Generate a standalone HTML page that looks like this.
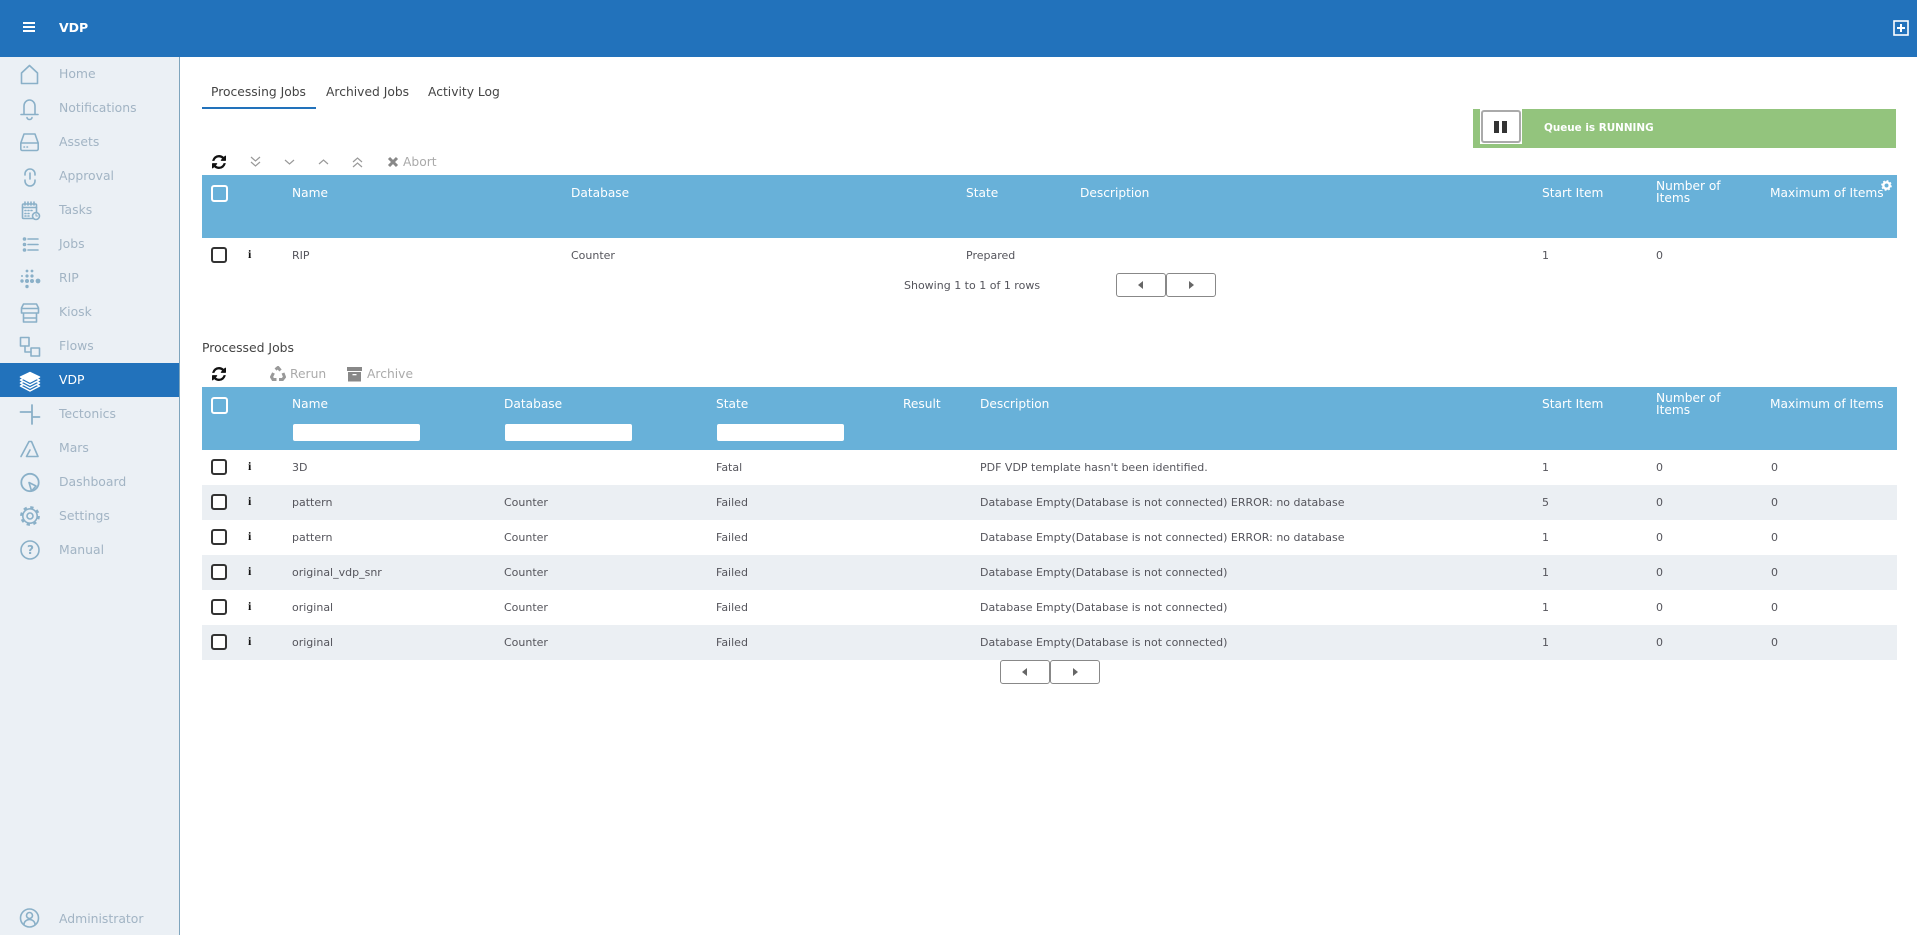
<!DOCTYPE html>
<html><head><meta charset="utf-8"><title>VDP</title>
<style>
html,body{margin:0;padding:0;width:1917px;height:935px;overflow:hidden;background:#fff;font-family:"DejaVu Sans","Liberation Sans",sans-serif;}
.a{position:absolute}
.t{position:absolute;white-space:nowrap;line-height:14px;height:14px;font-size:11px;color:#55555c;margin-top:1px}
.n{position:absolute;white-space:nowrap;line-height:16px;left:59px;font-size:12.4px;color:#a2b4c4;margin-top:1px}
.h{position:absolute;white-space:nowrap;line-height:14px;font-size:12.2px;color:#fff;}
.tab{position:absolute;white-space:nowrap;line-height:14px;font-size:12.3px;color:#444;top:85px}
.cb{position:absolute;left:211px;width:12px;height:12px;border:2px solid #333;border-radius:3px;background:#fff}
.chd{position:absolute;left:211px;width:13px;height:13px;border:2px solid #fff;border-radius:3px}
.i{position:absolute;left:248px;font:bold 12px/14px "Liberation Serif",serif;color:#111;margin-top:-1px}
.inp{position:absolute;top:424px;height:17px;width:127px;background:#fff;border-radius:2px}
.pg{position:absolute;width:48px;height:22px;border:1px solid #888;border-radius:3px;background:#fff}
.pg svg{position:absolute;left:20px;top:7px}
.tb{font-size:12.3px !important;color:#aaa !important;margin-top:0 !important}
</style></head><body>

<div class="a" style="left:0;top:0;width:1917px;height:57px;background:#2272bb"></div>
<div class="a" style="left:23px;top:22px;width:12px;height:2px;background:#fff;box-shadow:0 4px 0 #fff,0 8px 0 #fff"></div>
<div class="a" style="left:59px;top:21px;font-size:12.5px;font-weight:bold;line-height:14px;color:#fff">VDP</div>
<svg class="a" style="left:1892px;top:19px" width="18" height="18" viewBox="0 0 18 18"><rect x="2" y="2" width="14" height="14" fill="none" stroke="#fff" stroke-width="1.6"/><path d="M9 5v8M5 9h8" stroke="#fff" stroke-width="2"/></svg>

<div class="a" style="left:0;top:57px;width:179px;height:878px;background:#ebf0f5;border-right:1px solid #7fa5bd"></div>
<div class="a" style="left:0;top:363px;width:179px;height:34px;background:#2272bb"></div>

<div class="n" style="top:65px">Home</div>
<div class="n" style="top:99px">Notifications</div>
<div class="n" style="top:133px">Assets</div>
<div class="n" style="top:167px">Approval</div>
<div class="n" style="top:201px">Tasks</div>
<div class="n" style="top:235px">Jobs</div>
<div class="n" style="top:269px">RIP</div>
<div class="n" style="top:303px">Kiosk</div>
<div class="n" style="top:337px">Flows</div>
<div class="n" style="top:371px;color:#fff">VDP</div>
<div class="n" style="top:405px">Tectonics</div>
<div class="n" style="top:439px">Mars</div>
<div class="n" style="top:473px">Dashboard</div>
<div class="n" style="top:507px">Settings</div>
<div class="n" style="top:541px">Manual</div>
<div class="n" style="top:910px">Administrator</div>

<svg class="a" style="left:0;top:0" width="179" height="935" viewBox="0 0 179 935" fill="none" stroke="#8ab0c8" stroke-width="1.6" stroke-linejoin="round" stroke-linecap="round">
<path d="M21.5 83.5V73L29.5 65.5 37.5 73V83.5Z"/>
<path d="M24 114V106a5.5 6 0 0 1 11 0V114M21 114.5H38M27 117.5a2.5 2 0 0 0 5 0"/>
<path d="M20.8 143L24 134H35L38.2 143V149a1.5 1.5 0 0 1-1.5 1.5H22.3a1.5 1.5 0 0 1-1.5-1.5ZM20.8 143H38.2M24 147h.5M27 147h.5"/>
<path d="M25 175v-1a5 5 0 0 1 10 0v1M25 180v1a5 5 0 0 0 10 0v-1M30 173v6"/>
<rect x="22.5" y="204" width="14" height="14.5" rx="1"/><path d="M25 202v3M28 202v3M31 202v3M34 202v3M22.5 207.5H36.5M25 210.5h1M28 210.5h1M31 210.5h1M25 213.5h1M28 213.5h1M25 216h1M28 216h1"/><circle cx="36" cy="216" r="3.5" fill="#ebf0f5"/><path d="M36 214v2h1.5" stroke-width="1"/>
<path d="M28 239H38M28 244.5H38M28 250H38"/><circle cx="24.5" cy="239" r="1"/><circle cx="24.5" cy="244.5" r="1"/><circle cx="24.5" cy="250" r="1"/>
<g fill="#8ab0c8" stroke="none"><circle cx="27" cy="271" r="1.4"/><circle cx="32" cy="271" r="1.4"/><circle cx="22" cy="276" r="1"/><circle cx="27" cy="276" r="1.6"/><circle cx="32" cy="276" r="1.6"/><circle cx="22" cy="281" r="1.7"/><circle cx="27" cy="281" r="2"/><circle cx="32" cy="281" r="2"/><circle cx="38" cy="281" r="2.4"/><circle cx="27" cy="286.5" r="1.7"/></g>
<path d="M23.5 304H36.5L38.5 308V313H21.5V308ZM21.5 308.5H38.5M23.5 313V322H36.5V313M23.5 318H36.5"/>
<rect x="20.5" y="337.5" width="8.5" height="8.5"/><rect x="31" y="348" width="8.5" height="8"/><path d="M25 346V352H31"/>
<g stroke="#fff" fill="#2272bb" stroke-width="1.5"><path d="M20.5 386L30 381 39.5 386 30 391Z"/><path d="M20.5 383L30 378 39.5 383 30 388Z"/><path d="M20.5 380L30 375 39.5 380 30 385Z"/><path d="M20.5 377L30 372.5 39.5 377 30 382Z" fill="#fff"/></g>
<path d="M20.5 412H32M32 405V424M32 417H39.5" stroke-width="1.8"/>
<path d="M21 456.5L29 441.5H31.5L38 456.5H26.5L30 450"/>
<circle cx="30" cy="482.5" r="8.7" stroke-width="1.8"/><path d="M29 482.5L36 486 31.5 491Z" fill="#ebf0f5" stroke-width="1.6"/>
<circle cx="30" cy="516" r="3"/><circle cx="30" cy="516" r="7.2"/><circle cx="30" cy="516" r="8.7" stroke-width="2.4" stroke-dasharray="3.3 3.53" stroke-linecap="butt"/>
<circle cx="30" cy="550" r="9"/>
<circle cx="29.5" cy="918" r="9"/><circle cx="29.5" cy="915.5" r="3"/><path d="M24 924.5a5.5 5 0 0 1 11 0"/>
</svg>
<div class="a" style="left:26px;top:542px;width:9px;text-align:center;font:bold 12px/16px 'DejaVu Sans',sans-serif;color:#8ab0c8">?</div>

<div class="tab" style="left:211px">Processing Jobs</div>
<div class="tab" style="left:326px">Archived Jobs</div>
<div class="tab" style="left:428px">Activity Log</div>
<div class="a" style="left:202px;top:107px;width:114px;height:2px;background:#2272bb"></div>

<div class="a" style="left:1473px;top:109px;width:423px;height:39px;background:#93c47d"></div>
<div class="a" style="left:1480px;top:109px;width:42px;height:35px;background:#fff"></div>
<div class="a" style="left:1481px;top:110px;width:36px;height:29px;border:2px solid #aaa;border-radius:3px;background:#fff"></div>
<div class="a" style="left:1494px;top:121px;width:5px;height:12px;background:#333"></div>
<div class="a" style="left:1502px;top:121px;width:5px;height:12px;background:#333"></div>
<div class="a" style="left:1544px;top:121px;font-size:10.4px;font-weight:bold;line-height:14px;color:#fff">Queue is RUNNING</div>

<!-- toolbar 1 -->
<svg class="a" style="left:212px;top:155px" width="14" height="14" viewBox="128 128 1536 1536"><path fill="#111" d="M1639 1056q0 5-1 7-64 268-268 434.5t-478 166.5q-146 0-282.5-55t-243.5-157l-129 129q-19 19-45 19t-45-19-19-45v-448q0-26 19-45t45-19h448q26 0 45 19t19 45-19 45l-137 137q71 66 161 102t187 36q134 0 250-65t186-179q11-17 53-117 8-23 30-23h192q13 0 22.5 9.5t9.5 22.5zm25-800v448q0 26-19 45t-45 19h-448q-26 0-45-19t-19-45 19-45l138-138q-148-137-349-137-134 0-250 65t-186 179q-11 17-53 117-8 23-30 23h-199q-13 0-22.5-9.5t-9.5-22.5v-7q65-268 270-434.5t480-166.5q146 0 284 55.5t245 156.5l130-129q19-19 45-19t45 19 19 45z"/></svg>
<svg class="a" style="left:245px;top:155px" width="130" height="14" viewBox="0 0 130 14" fill="none" stroke="#999" stroke-width="1.2"><path d="M6 2l4.500 4 4.500-4M6 7l4.500 4 4.500-4"/><path d="M40 5l4.500 4 4.500-4"/><path d="M74 9l4.500-4 4.500 4"/><path d="M108 7l4.500-4 4.500 4M108 12l4.500-4 4.500 4"/></svg>
<svg class="a" style="left:387px;top:156px" width="12" height="12" viewBox="0 0 12 12"><path d="M2 2l8 8M10 2l-8 8" stroke="#888" stroke-width="3"/></svg>
<div class="t tb" style="left:403px;top:155px">Abort</div>

<!-- table 1 -->
<div class="a" style="left:202px;top:175px;width:1695px;height:63px;background:#68b1d9"></div>
<div class="chd" style="top:185px"></div>
<div class="h" style="left:292px;top:186px">Name</div>
<div class="h" style="left:571px;top:186px">Database</div>
<div class="h" style="left:966px;top:186px">State</div>
<div class="h" style="left:1080px;top:186px">Description</div>
<div class="h" style="left:1542px;top:186px">Start Item</div>
<div class="h" style="left:1656px;top:180px;line-height:12px">Number of<br>Items</div>
<div class="h" style="left:1770px;top:186px">Maximum of Items</div>
<svg class="a" style="left:1881px;top:180px" width="11" height="11" viewBox="0 0 11 11"><circle cx="5.5" cy="5.5" r="3.2" fill="none" stroke="#fff" stroke-width="2.4"/><circle cx="5.5" cy="5.5" r="4.6" fill="none" stroke="#fff" stroke-width="1.5" stroke-dasharray="1.8 1.81"/></svg>

<div class="cb" style="top:247px"></div><div class="i" style="top:248px">i</div>
<div class="t" style="left:292px;top:248px">RIP</div>
<div class="t" style="left:571px;top:248px">Counter</div>
<div class="t" style="left:966px;top:248px">Prepared</div>
<div class="t" style="left:1542px;top:248px">1</div>
<div class="t" style="left:1656px;top:248px">0</div>

<div class="t" style="left:904px;top:278px">Showing 1 to 1 of 1 rows</div>
<div class="pg" style="left:1116px;top:273px"><svg width="8" height="8" viewBox="0 0 8 8"><path d="M6 0v8L1 4z" fill="#666"/></svg></div>
<div class="pg" style="left:1166px;top:273px"><svg width="8" height="8" viewBox="0 0 8 8"><path d="M2 0v8l5-4z" fill="#666"/></svg></div>

<div class="t" style="left:202px;top:341px;font-size:12.4px;color:#444;margin-top:0">Processed Jobs</div>

<!-- toolbar 2 -->
<svg class="a" style="left:212px;top:367px" width="14" height="14" viewBox="128 128 1536 1536"><path fill="#111" d="M1639 1056q0 5-1 7-64 268-268 434.5t-478 166.5q-146 0-282.5-55t-243.5-157l-129 129q-19 19-45 19t-45-19-19-45v-448q0-26 19-45t45-19h448q26 0 45 19t19 45-19 45l-137 137q71 66 161 102t187 36q134 0 250-65t186-179q11-17 53-117 8-23 30-23h192q13 0 22.5 9.5t9.5 22.5zm25-800v448q0 26-19 45t-45 19h-448q-26 0-45-19t-19-45 19-45l138-138q-148-137-349-137-134 0-250 65t-186 179q-11 17-53 117-8 23-30 23h-199q-13 0-22.5-9.5t-9.5-22.5v-7q65-268 270-434.5t480-166.5q146 0 284 55.5t245 156.5l130-129q19-19 45-19t45 19 19 45z"/></svg>
<svg class="a" style="left:270px;top:366px" width="16" height="16" viewBox="0 0 16 16" fill="none" stroke="#999" stroke-width="3"><path d="M5.5 3.5L8 1.5l2.500 3M13 7l1.500 4-2 2.500H9M6.500 13.500H3L1.500 11l2-4"/></svg>
<div class="t tb" style="left:290px;top:367px">Rerun</div>
<svg class="a" style="left:347px;top:367px" width="15" height="15" viewBox="0 0 15 15"><path d="M0 0h15v4H0zM1 5h13v9.500H1z" fill="#888"/><path d="M5.500 7h4v1.300h-4z" fill="#fff"/></svg>
<div class="t tb" style="left:367px;top:367px">Archive</div>

<!-- table 2 -->
<div class="a" style="left:202px;top:387px;width:1695px;height:63px;background:#68b1d9"></div>
<div class="chd" style="top:397px"></div>
<div class="h" style="left:292px;top:397px">Name</div>
<div class="h" style="left:504px;top:397px">Database</div>
<div class="h" style="left:716px;top:397px">State</div>
<div class="h" style="left:903px;top:397px">Result</div>
<div class="h" style="left:980px;top:397px">Description</div>
<div class="h" style="left:1542px;top:397px">Start Item</div>
<div class="h" style="left:1656px;top:392px;line-height:12px">Number of<br>Items</div>
<div class="h" style="left:1770px;top:397px">Maximum of Items</div>
<div class="inp" style="left:293px"></div><div class="inp" style="left:505px"></div><div class="inp" style="left:717px"></div>

<div class="a" style="left:202px;top:485px;width:1695px;height:35px;background:#ebeff3"></div>
<div class="a" style="left:202px;top:555px;width:1695px;height:35px;background:#ebeff3"></div>
<div class="a" style="left:202px;top:625px;width:1695px;height:35px;background:#ebeff3"></div>

<div class="cb" style="top:459px"></div><div class="i" style="top:460px">i</div>
<div class="t" style="left:292px;top:460px">3D</div>
<div class="t" style="left:716px;top:460px">Fatal</div>
<div class="t" style="left:980px;top:460px">PDF VDP template hasn't been identified.</div>
<div class="t" style="left:1542px;top:460px">1</div><div class="t" style="left:1656px;top:460px">0</div><div class="t" style="left:1771px;top:460px">0</div>

<div class="cb" style="top:494px"></div><div class="i" style="top:495px">i</div>
<div class="t" style="left:292px;top:495px">pattern</div>
<div class="t" style="left:504px;top:495px">Counter</div>
<div class="t" style="left:716px;top:495px">Failed</div>
<div class="t" style="left:980px;top:495px">Database Empty(Database is not connected) ERROR: no database</div>
<div class="t" style="left:1542px;top:495px">5</div><div class="t" style="left:1656px;top:495px">0</div><div class="t" style="left:1771px;top:495px">0</div>

<div class="cb" style="top:529px"></div><div class="i" style="top:530px">i</div>
<div class="t" style="left:292px;top:530px">pattern</div>
<div class="t" style="left:504px;top:530px">Counter</div>
<div class="t" style="left:716px;top:530px">Failed</div>
<div class="t" style="left:980px;top:530px">Database Empty(Database is not connected) ERROR: no database</div>
<div class="t" style="left:1542px;top:530px">1</div><div class="t" style="left:1656px;top:530px">0</div><div class="t" style="left:1771px;top:530px">0</div>

<div class="cb" style="top:564px"></div><div class="i" style="top:565px">i</div>
<div class="t" style="left:292px;top:565px">original_vdp_snr</div>
<div class="t" style="left:504px;top:565px">Counter</div>
<div class="t" style="left:716px;top:565px">Failed</div>
<div class="t" style="left:980px;top:565px">Database Empty(Database is not connected)</div>
<div class="t" style="left:1542px;top:565px">1</div><div class="t" style="left:1656px;top:565px">0</div><div class="t" style="left:1771px;top:565px">0</div>

<div class="cb" style="top:599px"></div><div class="i" style="top:600px">i</div>
<div class="t" style="left:292px;top:600px">original</div>
<div class="t" style="left:504px;top:600px">Counter</div>
<div class="t" style="left:716px;top:600px">Failed</div>
<div class="t" style="left:980px;top:600px">Database Empty(Database is not connected)</div>
<div class="t" style="left:1542px;top:600px">1</div><div class="t" style="left:1656px;top:600px">0</div><div class="t" style="left:1771px;top:600px">0</div>

<div class="cb" style="top:634px"></div><div class="i" style="top:635px">i</div>
<div class="t" style="left:292px;top:635px">original</div>
<div class="t" style="left:504px;top:635px">Counter</div>
<div class="t" style="left:716px;top:635px">Failed</div>
<div class="t" style="left:980px;top:635px">Database Empty(Database is not connected)</div>
<div class="t" style="left:1542px;top:635px">1</div><div class="t" style="left:1656px;top:635px">0</div><div class="t" style="left:1771px;top:635px">0</div>

<div class="pg" style="left:1000px;top:660px"><svg width="8" height="8" viewBox="0 0 8 8"><path d="M6 0v8L1 4z" fill="#666"/></svg></div>
<div class="pg" style="left:1050px;top:660px"><svg width="8" height="8" viewBox="0 0 8 8"><path d="M2 0v8l5-4z" fill="#666"/></svg></div>
</body></html>
